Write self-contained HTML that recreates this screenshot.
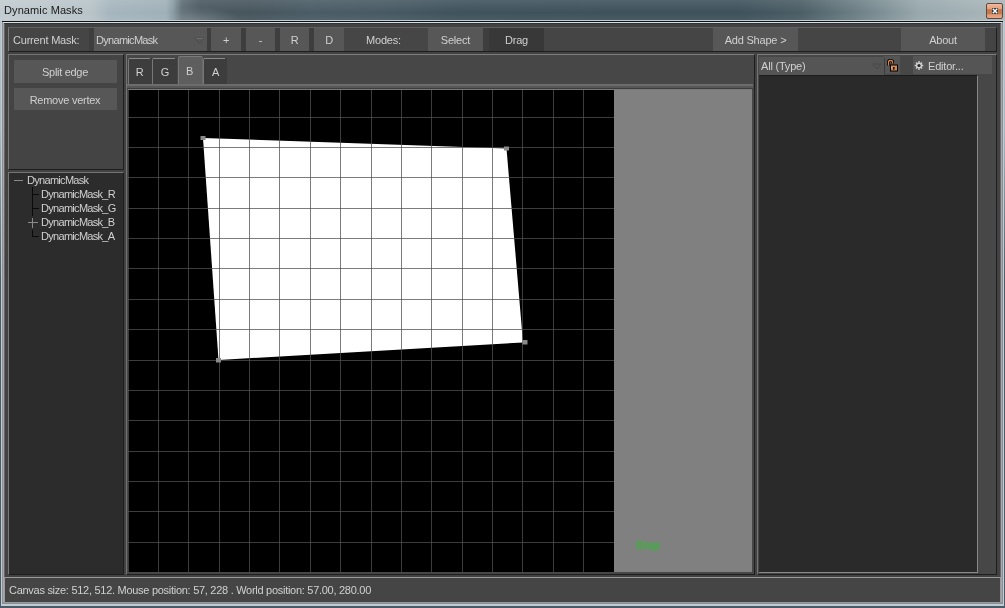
<!DOCTYPE html>
<html><head><meta charset="utf-8">
<style>
*{margin:0;padding:0;box-sizing:border-box}
html,body{width:1005px;height:608px;overflow:hidden;background:linear-gradient(180deg,#b8c4ca 0,#a8b8c0 130px,#4a5a66 280px,#4a5a66 608px)}
body{position:relative;will-change:transform;font-family:"Liberation Sans",sans-serif;font-size:11px;color:#d0d0d0;letter-spacing:-0.2px}
.a{position:absolute}
#title{left:0;top:0;width:1005px;height:21px;
 background:linear-gradient(90deg,#c2ccd0 0px,#b8c4c8 90px,#a6b6be 110px,#a0b0b8 166px,#8a9ca4 173px,#5e6c74 182px,#4a5860 200px,#47555d 250px,#4a5c66 310px,#485a64 380px,#3f535d 460px,#3e525c 600px,#3e525c 740px,#4b5d65 800px,#6f8288 860px,#98a8ad 920px,#aab7bb 1005px)}
#titleglow{left:0;top:0;width:1005px;height:21px;background:linear-gradient(180deg,rgba(255,255,255,.10),rgba(255,255,255,0) 60%,rgba(255,255,255,.06))}
#ttext{left:4px;top:4px;font-size:11px;color:#1a1a1a;letter-spacing:0.1px}
#fA{left:1px;top:20px;width:1003px;height:586px;background:#c0ccd2}
#fB{left:2px;top:21px;width:1001px;height:583px;background:#8a9096;border-top:1px solid #111}
#frame{left:3px;top:22px;width:999px;height:580px;background:#a8a8a8}
#frameIn{left:4px;top:23px;width:997px;height:578px;background:#424242;border-top:1px solid #2a3840;border-left:1px solid #666;border-right:1px solid #6a6a6a}
.panel{position:absolute;border-top:1px solid #747474;border-left:1px solid #7a7a7a;border-right:1px solid #1e1e1e;border-bottom:1px solid #1e1e1e}
.btn{position:absolute;background:#575757;text-align:center;color:#d0d0d0;padding-top:1px}
.tab{position:absolute;top:58px;width:24px;height:27px;background:#3d3d3d;border-left:1px solid #777;border-top-left-radius:2px;text-align:center;line-height:29px;font-size:11px}
.tab:not(.sel)::before{content:"";position:absolute;left:0;right:2px;top:0;height:1px;background:#8a8a8a}
</style></head><body>
<div id="title" class="a"></div>
<div id="titleglow" class="a"></div><div class="a" style="left:170px;top:6px;width:70px;height:14px;background:radial-gradient(ellipse at 35% 100%,rgba(150,160,165,.45),rgba(150,160,165,0) 70%)"></div>
<div id="ttext" class="a">Dynamic Masks</div>
<!-- close button -->
<div class="a" style="left:986px;top:3px;width:17px;height:16px;border:1px solid #5a4a44;border-radius:2px;background:linear-gradient(180deg,#f4c0a4 0,#eeae8e 10%,#e8a282 34%,#c47a4e 37%,#c27a4c 72%,#e29a76 76%,#eaa484 100%)"></div>
<div class="a" style="left:992px;top:8px;width:6px;height:6px;background:#3c3c3c"></div>
<svg class="a" style="left:992px;top:8px" width="6" height="6"><path d="M0.8 0.8 L5.2 5.2 M5.2 0.8 L0.8 5.2" stroke="#fff" stroke-width="1.4"/></svg>

<div id="fA" class="a"></div><div id="fB" class="a"></div><div id="frame" class="a"></div>
<div id="frameIn" class="a"></div><div class="a" style="left:3px;top:22px;width:999px;height:1px;background:#dcdcdc"></div>

<!-- toolbar -->
<div class="panel" style="left:8px;top:27px;width:989px;height:25px;background:#454545;border-top-color:#606060"></div>
<div class="a" style="left:13px;top:29px;height:22px;line-height:22px">Current Mask:</div>
<div class="a" style="left:89px;top:28px;width:122px;height:23px;background:#3e3e3e"></div>
<div class="btn" style="left:94px;top:28px;width:113px;height:23px;line-height:23px;text-align:left;padding-left:2px;letter-spacing:-0.7px">DynamicMask</div>
<svg class="a" style="left:194px;top:37px" width="11" height="8"><path d="M1 1 L10 1 L5.5 6.5 Z" fill="none" stroke="#4a4a4a" stroke-width="1"/><path d="M2 1.5 L9 1.5" stroke="#6c6c6c"/></svg>
<div class="a" style="left:207px;top:28px;width:4px;height:23px;background:#3e3e3e"></div>
<div class="btn" style="left:211px;top:28px;width:30px;height:23px;line-height:23px">+</div>
<div class="a" style="left:241px;top:28px;width:5px;height:23px;background:#3e3e3e"></div>
<div class="btn" style="left:246px;top:28px;width:29px;height:23px;line-height:23px">-</div>
<div class="a" style="left:275px;top:28px;width:5px;height:23px;background:#3e3e3e"></div>
<div class="btn" style="left:280px;top:28px;width:29px;height:23px;line-height:23px">R</div>
<div class="a" style="left:309px;top:28px;width:5px;height:23px;background:#3e3e3e"></div>
<div class="btn" style="left:314px;top:28px;width:30px;height:23px;line-height:23px">D</div>
<div class="a" style="left:344px;top:28px;width:84px;height:23px;background:#464646"></div><div class="a" style="left:366px;top:29px;line-height:23px">Modes:</div>
<div class="btn" style="left:428px;top:28px;width:55px;height:23px;line-height:23px">Select</div>
<div class="a" style="left:483px;top:28px;width:6px;height:23px;background:#3e3e3e"></div>
<div class="btn" style="left:489px;top:28px;width:55px;height:23px;line-height:23px;background:#383838">Drag</div>
<div class="a" style="left:544px;top:28px;width:169px;height:23px;background:#454545"></div>
<div class="btn" style="left:713px;top:28px;width:85px;height:23px;line-height:23px">Add Shape &gt;</div>
<div class="a" style="left:798px;top:28px;width:103px;height:23px;background:#454545"></div>
<div class="btn" style="left:901px;top:28px;width:84px;height:23px;line-height:23px">About</div>
<div class="a" style="left:985px;top:28px;width:11px;height:23px;background:#444"></div>

<!-- left upper panel -->
<div class="panel" style="left:8px;top:54px;width:116px;height:116px;background:#444"></div>
<div class="btn" style="left:14px;top:60px;width:103px;height:23px;line-height:23px;letter-spacing:-0.3px;text-indent:-1px">Split edge</div>
<div class="btn" style="left:14px;top:88px;width:103px;height:22px;line-height:22px;letter-spacing:-0.25px;text-indent:-1px">Remove vertex</div>

<!-- tree panel -->
<div class="panel" style="left:8px;top:172px;width:116px;height:403px;background:#2c2c2c"></div>
<div class="a" style="left:14px;top:180px;width:9px;height:1px;background:#8a8a8a"></div>
<div class="a" style="left:27px;top:174px;line-height:13px;letter-spacing:-0.7px">DynamicMask</div>
<div class="a" style="left:32px;top:187px;width:1px;height:29px;background:#0a0a0a"></div>
<div class="a" style="left:32px;top:230px;width:1px;height:7px;background:#0a0a0a"></div>
<div class="a" style="left:33px;top:194px;width:6px;height:1px;background:#0a0a0a"></div>
<div class="a" style="left:33px;top:208px;width:6px;height:1px;background:#0a0a0a"></div>
<div class="a" style="left:28px;top:222px;width:10px;height:1px;background:#8a8a8a"></div>
<div class="a" style="left:32px;top:218px;width:1px;height:10px;background:#8a8a8a"></div>
<div class="a" style="left:33px;top:236px;width:6px;height:1px;background:#0a0a0a"></div>
<div class="a" style="left:41px;top:188px;line-height:13px;letter-spacing:-0.7px">DynamicMask_R</div>
<div class="a" style="left:41px;top:202px;line-height:13px;letter-spacing:-0.7px">DynamicMask_G</div>
<div class="a" style="left:41px;top:216px;line-height:13px;letter-spacing:-0.7px">DynamicMask_B</div>
<div class="a" style="left:41px;top:230px;line-height:13px;letter-spacing:-0.7px">DynamicMask_A</div>

<!-- canvas panel -->
<div class="panel" style="left:126px;top:54px;width:629px;height:521px;background:#474747;border-color:#7c7c7c #1e1e1e #1e1e1e #747474"></div>
<div class="tab" style="left:128px;text-indent:-2px">R</div>
<div class="tab" style="left:152px;width:25px">G</div>
<div class="tab" style="left:203px">A</div>
<div class="tab sel" style="left:178px;top:56px;height:30px;background:#5e5e5e;border-right:1px solid #6a6a6a;border-top:1px solid #7a7a7a;border-top-right-radius:2px;width:25px;line-height:28px;text-indent:-2px">B</div>
<div class="a" style="left:127px;top:84px;width:626px;height:2px;background:#6c6c6c"></div>
<div class="a" style="left:127px;top:86px;width:626px;height:2px;background:#575757"></div>
<div class="a" style="left:127px;top:88px;width:626px;height:1px;background:#3e3e3e"></div>
<div class="a" style="left:128px;top:89px;width:624px;height:1px;background:#7a7a7a"></div>
<svg class="a" style="left:128px;top:90px" width="486" height="482" viewBox="0 3 486 482">
<rect x="0" y="0" width="486" height="486" fill="#000"/>
<polygon points="75,51 378.5,61.5 395,255.5 90.5,273" fill="#fff"/>
<g stroke="rgba(80,80,80,0.75)" stroke-width="1" shape-rendering="crispEdges">
<path d="M0.5 0V486M30.5 0V486M60.5 0V486M91.5 0V486M121.5 0V486M151.5 0V486M182.5 0V486M212.5 0V486M243.5 0V486M273.5 0V486M303.5 0V486M334.5 0V486M364.5 0V486M394.5 0V486M425.5 0V486M455.5 0V486"/>
<path d="M0 2.5H486M0 30.5H486M0 60.5H486M0 90.5H486M0 121.5H486M0 151.5H486M0 181.5H486M0 212.5H486M0 242.5H486M0 273.5H486M0 303.5H486M0 333.5H486M0 364.5H486M0 394.5H486M0 424.5H486M0 455.5H486"/>
</g>
<g fill="#8a8a8a">
<rect x="72.5" y="49" width="5" height="4"/>
<rect x="376" y="59.5" width="5" height="4"/>
<rect x="394.5" y="253" width="5" height="4.5"/>
<rect x="88" y="271" width="5" height="4.5"/>
</g>
</svg>
<div class="a" style="left:614px;top:90px;width:138px;height:482px;background:#808080"></div>
<svg class="a" style="left:635px;top:540px" width="25" height="12"><path d="M1 0.5H7L11 3V8L9 9.5H1Z" fill="#5a9a5a"/><path d="M11 2.5H25V9.5H22V11H17V9.5H12Z" fill="#5a9a5a"/><rect x="4.5" y="2.5" width="1.5" height="4" fill="#7a7f7a"/></svg>

<!-- right panel -->
<div class="panel" style="left:757px;top:54px;width:240px;height:521px;background:#474747;border-color:#7c7c7c #1e1e1e #1e1e1e #747474"></div>
<div class="btn" style="left:759px;top:57px;width:125px;height:18px;line-height:18px;text-align:left;padding-left:2px;padding-top:0;background:#555">All (Type)</div>
<svg class="a" style="left:872px;top:63px" width="10" height="7"><path d="M1 1 L9 1 L5 6 Z" fill="none" stroke="#494949"/></svg>
<div class="btn" style="left:884px;top:56px;width:16px;height:18px;background:#555"></div>
<svg class="a" style="left:884px;top:58px" width="16" height="16"><path d="M4.5 7.5V4Q4.5 2.5 6 2.5H7Q8.5 2.5 8.5 4V5.5" fill="none" stroke="#000" stroke-width="3"/><path d="M4.5 7.5V4Q4.5 2.5 6 2.5H7Q8.5 2.5 8.5 4V5.5" fill="none" stroke="#d8884c" stroke-width="1.3"/><rect x="6.5" y="7" width="7" height="6" fill="#d8884c" stroke="#000" stroke-width="1"/><rect x="9" y="9" width="1.6" height="2.6" fill="#111"/><rect x="7" y="9" width="1" height="1" fill="#f4b8a8"/><path d="M0.5 0V16" stroke="#3c3c3c"/></svg>
<div class="btn" style="left:913px;top:56px;width:79px;height:18px;line-height:18px;text-align:left;padding-left:15px;background:#555">Editor...</div>
<svg class="a" style="left:914px;top:60px" width="10" height="11"><g stroke="#cfcfcf" stroke-width="1.4"><path d="M5 1V10M0.7 5.5H9.3M2 2.5L8 8.5M8 2.5L2 8.5"/></g><circle cx="5" cy="5.5" r="3" fill="#cfcfcf"/><circle cx="5" cy="5.5" r="1.6" fill="#2a2a2a"/></svg>
<div class="a" style="left:759px;top:75px;width:219px;height:498px;background:#2a2a2a;border-top:1px solid #1c1c1c;border-right:1px solid #888;border-bottom:1px solid #888"></div>

<!-- status -->
<div class="a" style="left:4px;top:577px;width:997px;height:26px;border:1px solid #9a9a9a;background:#454545"></div>
<div class="a" style="left:9px;top:584px;letter-spacing:-0.28px">Canvas size: 512, 512. Mouse position: 57, 228 . World position: 57.00, 280.00</div>
</body></html>
